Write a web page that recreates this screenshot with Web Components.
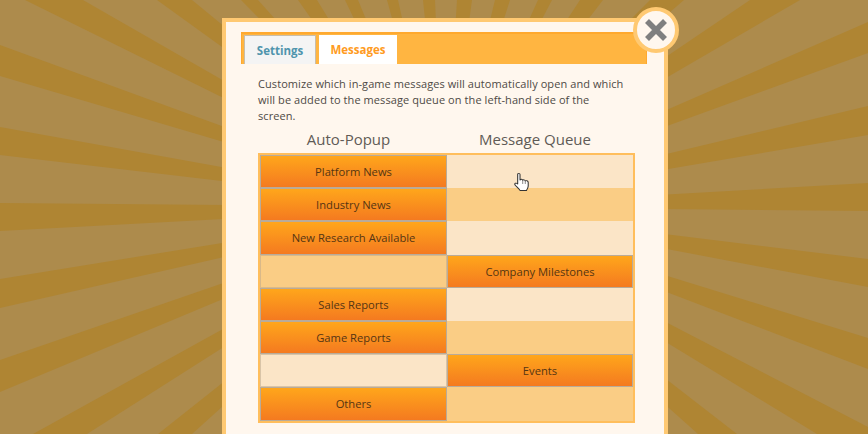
<!DOCTYPE html>
<html>
<head>
<meta charset="utf-8">
<title>Options</title>
<style>
  html, body { margin: 0; height: 100%; overflow: hidden; background: #ad8b4c; }
  body { font-family: "Open Sans", "Liberation Sans", sans-serif; }
</style>
</head>
<body>
<sun-rays></sun-rays>
<game-dialog>
  <tab-bar>
    <tab-item kind="off">Settings</tab-item>
    <tab-item kind="on">Messages</tab-item>
  </tab-bar>
  <p slot="intro">Customize which in-game messages will automatically open and which will be added to the message queue on the left-hand side of the screen.</p>
  <msg-table slot="table">
    <msg-row side="left" shade="light">Platform News</msg-row>
    <msg-row side="left" shade="dark">Industry News</msg-row>
    <msg-row side="left" shade="light">New Research Available</msg-row>
    <msg-row side="right" shade="dark">Company Milestones</msg-row>
    <msg-row side="left" shade="light">Sales Reports</msg-row>
    <msg-row side="left" shade="dark">Game Reports</msg-row>
    <msg-row side="right" shade="light">Events</msg-row>
    <msg-row side="left" shade="dark">Others</msg-row>
  </msg-table>
</game-dialog>
<script>
// far ends of each ray on the window edge, all of them meet in the middle of the dialog
const RAYS = [
  '0,45 0,76', '0,127 0,155', '0,203 0,231', '0,279 0,308', '0,360 0,392',
  '33,434 87,434', '158,434 192,434',
  '25,0 83,0', '157,0 192,0', '241,0 258,0', '298,0 317,0', '345,0 358,0',
  '387,0 398,0', '423,0 435,0', '457,0 472,0', '495,0 510,0', '538,0 552,0',
  '580,0 603,0', '650,0 684,0', '750,0 800,0',
  '868,22 868,53', '868,106 868,135', '868,183 868,211', '868,259 868,287',
  '868,338 868,369', '868,427 868,434 817,434', '698,434 737,434'
];

class SunRays extends HTMLElement {
  constructor() {
    super();
    this.attachShadow({ mode: 'open' });
    const polys = RAYS.map(r => `<polygon points="444,207 ${r}"/>`).join('');
    this.shadowRoot.innerHTML = `
      <style>
        :host { position: fixed; inset: 0; display: block; background: #ad8b4c; }
        svg { display: block; }
        polygon { fill: #af8533; }
      </style>
      <svg width="868" height="434" viewBox="0 0 868 434">${polys}</svg>
    `;
  }
}

class GameDialog extends HTMLElement {
  constructor() {
    super();
    this.attachShadow({ mode: 'open' });
    this.shadowRoot.innerHTML = `
      <style>
        :host {
          position: relative;
          display: block;
          box-sizing: border-box;
          width: 446px;
          height: 416px;
          margin: 18px 0 0 222px;
          padding: 10px 17px 0 15px;
          background: #fff7ee;
          border: 4px solid #ffc972;
          border-bottom: none;
          color: #4e4a45;
        }
        .intro {
          padding: 12px 19px 0 17px;
          font-size: 11px;
          letter-spacing: .08px;
          line-height: 16px;
        }
        ::slotted(p) { margin: 0; }
        .heads {
          display: grid;
          grid-template-columns: 187px 186px;
          margin: 5px 0 0 14px;
          font-size: 15px;
          line-height: 20px;
          text-align: center;
          color: #5f5b56;
        }
        .close {
          position: absolute;
          left: 407px;
          top: -15px;
          box-sizing: border-box;
          width: 46px;
          height: 46px;
          border: 4px solid #ffc972;
          border-radius: 50%;
          background: #fff7ee;
          display: flex;
          align-items: center;
          justify-content: center;
        }
      </style>
      <slot></slot>
      <div class="intro"><slot name="intro"></slot></div>
      <div class="heads"><div>Auto-Popup</div><div>Message Queue</div></div>
      <slot name="table"></slot>
      <div class="close">
        <svg width="26" height="26" viewBox="-13 -13 26 26"><path d="M-9-9 9 9M9-9-9 9" stroke="#7f7f7f" stroke-width="5.6" fill="none"/></svg>
      </div>
    `;
  }
}

class TabBar extends HTMLElement {
  constructor() {
    super();
    this.attachShadow({ mode: 'open' });
    this.shadowRoot.innerHTML = `
      <style>
        :host {
          display: flex;
          align-items: flex-end;
          gap: 3px;
          box-sizing: border-box;
          height: 32px;
          padding-left: 2px;
          background: #ffb541;
          border-top: 2px solid #ffa92f;
          border-left: 1px solid #ffa92f;
          border-right: 1px solid #ffa92f;
        }
      </style>
      <slot></slot>
    `;
  }
}

class TabItem extends HTMLElement {
  constructor() {
    super();
    this.attachShadow({ mode: 'open' });
    this.shadowRoot.innerHTML = `
      <style>
        :host {
          display: flex;
          align-items: center;
          justify-content: center;
          box-sizing: border-box;
          height: 29px;
          font-size: 11.5px;
          font-weight: 700;
        }
        :host([kind="off"]) {
          width: 72px;
          color: #4f94ad;
          background: #f4f4f4;
          border: 1px solid #c9bda9;
          border-bottom: none;
        }
        :host([kind="on"]) {
          width: 78px;
          color: #ff9b22;
          background: #fff;
        }
      </style>
      <slot></slot>
    `;
  }
}

class MsgTable extends HTMLElement {
  constructor() {
    super();
    this.attachShadow({ mode: 'open' });
    this.shadowRoot.innerHTML = `
      <style>
        :host {
          display: grid;
          grid-auto-rows: 33.2px;
          box-sizing: border-box;
          width: 377px;
          margin: 4px 0 0 17px;
          border: 2px solid #ffbe5c;
        }
      </style>
      <slot></slot>
    `;
  }
}

class MsgRow extends HTMLElement {
  constructor() {
    super();
    this.attachShadow({ mode: 'open' });
    const label = '<div class="btn"><slot></slot></div>';
    const left = this.getAttribute('side') === 'left';
    this.shadowRoot.innerHTML = `
      <style>
        :host {
          display: grid;
          grid-template-columns: 187px 186px;
          font-size: 11.2px;
          color: #553513;
        }
        .cell { background: #fbe5c7; }
        :host([shade="dark"]) .cell { background: #facd85; }
        .slotbox { box-shadow: inset 0 0 0 1px rgba(190, 170, 140, .55); }
        .btn {
          display: flex;
          align-items: center;
          justify-content: center;
          box-sizing: border-box;
          background: linear-gradient(#ffa61b, #f47a20);
          border: 1px solid #b9ab99;
        }
      </style>
      ${left ? label + '<div class="cell"></div>' : '<div class="cell slotbox"></div>' + label}
    `;
  }
}

class HandCursor extends HTMLElement {
  constructor() {
    super();
    this.attachShadow({ mode: 'open' });
    this.shadowRoot.innerHTML = `
      <style>
        :host { position: fixed; left: 514px; top: 172px; display: block; width: 16px; height: 20px; }
        svg { display: block; }
      </style>
      <svg width="16" height="20" viewBox="0 0 16 20">
        <g transform="translate(-1 0) scale(1.17 1)">
          <path d="M4 2.5C4 1 6 1 6 2.500V8C6.500 7 8 7 8.300 8.300 8.800 7.500 10.200 7.700 10.500 9 11 8.400 13 8.500 13 10.500V14C13 16 12 17 11.500 18.500H6C5.500 16.500 3 15 1.800 13 .8 11.500 2.500 10.200 4 12Z" fill="#fff" stroke="#333" stroke-width=".9" stroke-linejoin="round"/>
          <path d="M8.300 8.300V12M10.500 9V12" stroke="#666" stroke-width=".7" fill="none"/>
        </g>
      </svg>
    `;
  }
}

customElements.define('sun-rays', SunRays);
customElements.define('game-dialog', GameDialog);
customElements.define('tab-bar', TabBar);
customElements.define('tab-item', TabItem);
customElements.define('msg-table', MsgTable);
customElements.define('msg-row', MsgRow);
customElements.define('hand-cursor', HandCursor);
document.body.appendChild(document.createElement('hand-cursor'));
</script>
</body>
</html>
